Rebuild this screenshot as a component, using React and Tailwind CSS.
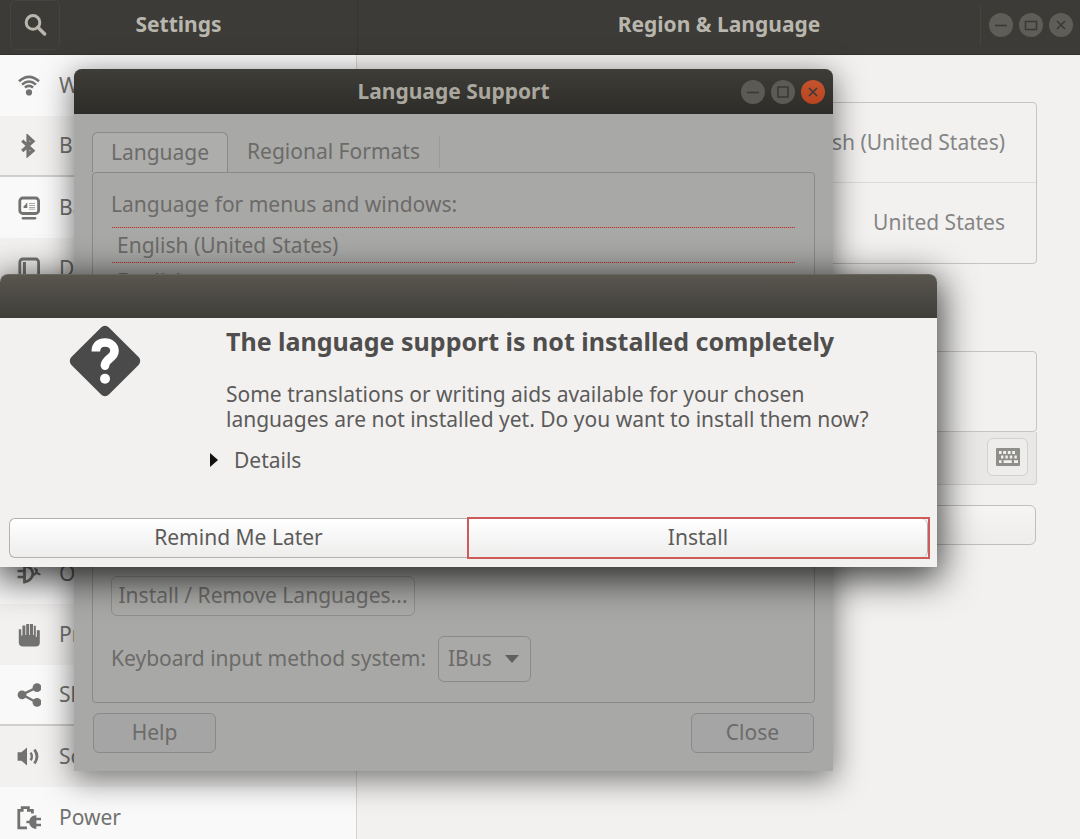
import React, { useState } from 'react';
import clsx from 'clsx';

const WifiIcon = () => (
  <svg viewBox="0 0 24 24" className="w-6 h-6" fill="none" stroke="currentColor" strokeWidth="2.6">
    <path d="M2 7.2Q12 -1.6 22 7.2" />
    <path d="M5 10.6Q12 4.4 19 10.6" />
    <path d="M7.9 13.6Q12 10 16.1 13.6" />
    <circle cx="12" cy="18.4" r="3.1" fill="currentColor" stroke="none" />
  </svg>
);

const BluetoothIcon = () => (
  <svg viewBox="0 0 24 24" className="w-6 h-6" fill="none" stroke="currentColor" strokeWidth="3.2">
    <path d="M5.2 6.6L16 16.6L11 21V2.6L16 7.2L5.2 17" />
  </svg>
);

const BackgroundIcon = () => (
  <svg viewBox="0 0 24 24" className="w-6 h-6" fill="none" stroke="currentColor">
    <rect x="2.8" y="2" width="18.8" height="15.5" rx="3" strokeWidth="2.8" />
    <path d="M6 22.2H18" strokeWidth="2.6" strokeLinecap="round" />
    <path d="M6.6 12V10.5L10.3 6.5V12Z" fill="currentColor" stroke="none" />
    <path d="M12 7.5H18M12 9.5H18M12 11.5H18M12 13.2H18" strokeWidth="1" opacity=".6" />
  </svg>
);

const DockIcon = () => (
  <svg viewBox="0 0 24 24" className="w-6 h-6" fill="none" stroke="currentColor">
    <rect x="2.8" y="2" width="18.8" height="19" rx="3" strokeWidth="2.8" />
    <path d="M7.4 5V18" strokeWidth="3" />
  </svg>
);

const BellIcon = () => (
  <svg viewBox="0 0 24 24" className="w-6 h-6" fill="currentColor">
    <path d="M12 2a6 6 0 0 0-6 6v6l-2 4h16l-2-4V8a6 6 0 0 0-6-6zM10 20h4v2h-4z" />
  </svg>
);

const SearchIcon = () => (
  <svg viewBox="0 0 24 24" className="w-6 h-6" fill="none" stroke="currentColor">
    <circle cx="10" cy="9.4" r="6.8" strokeWidth="3" />
    <path d="M14.8 14.2L21.6 21" strokeWidth="3.4" strokeLinecap="round" />
  </svg>
);

const FlagIcon = () => (
  <svg viewBox="0 0 24 24" className="w-6 h-6" fill="currentColor">
    <path d="M4 2h2v20H4zM8 3h13l-3 5 3 5H8z" />
  </svg>
);

const AccessIcon = () => (
  <svg viewBox="0 0 24 24" className="w-6 h-6" fill="currentColor">
    <circle cx="12" cy="4" r="2.5" />
    <path d="M3 8h18v2.4h-6V22h-2v-6h-2v6H9V10.4H3z" />
  </svg>
);

const PlugIcon = () => (
  <svg viewBox="0 0 24 24" className="w-6 h-6" fill="none" stroke="currentColor">
    <path d="M7.5 4.5C13 4 15.5 8 16 11.8C15.5 15 13 19.4 7.5 20Z" strokeWidth="2.8" />
    <path d="M0.5 9H7M0.5 15H7" strokeWidth="2.6" />
    <path d="M16 13C19 12.4 20 10 20 7M18 6C20 12 22 12.6 23.4 12" strokeWidth="2" />
  </svg>
);

const HandIcon = () => (
  <svg viewBox="0 0 24 24" className="w-6 h-6" fill="currentColor">
    <path d="M1.8 6.2h2.4v6.4h1.2V2.6h3v9.4h.8V1h3v11h.8V1h3v11h.8V2.8h2v11.4l1-.8V7.2h3v12.2a4 4 0 0 1-4 4H6a4.2 4.2 0 0 1-4.2-4z" />
  </svg>
);

const ShareIcon = () => (
  <svg viewBox="0 0 24 24" className="w-6 h-6" fill="currentColor">
    <path d="M19.8 4.5L5 11.6L19.8 19.5" fill="none" stroke="currentColor" strokeWidth="2.4" />
    <circle cx="5" cy="11.8" r="4.4" />
    <circle cx="20" cy="4.6" r="4.4" />
    <circle cx="20" cy="19.4" r="4.4" />
  </svg>
);

const SoundIcon = () => (
  <svg viewBox="0 0 24 24" className="w-6 h-6" fill="currentColor">
    <path d="M0.6 7.2H4.4L10 2.4V20.4L4.4 15.8H0.6Z" />
    <path d="M13.6 7.6Q16.2 11.4 13.6 15.2" fill="none" stroke="currentColor" strokeWidth="2.4" />
    <path d="M17.4 4.6Q22.6 11.4 17.4 18.4" fill="none" stroke="currentColor" strokeWidth="2.8" />
  </svg>
);

const PowerIcon = () => (
  <svg viewBox="0 0 24 24" className="w-6 h-6" fill="none" stroke="currentColor">
    <path d="M10 21.8H1.8V4.4H5.2V1.6H11.4V4.4H15.4V7.4" strokeWidth="2.8" />
    <path d="M9.4 16H13" strokeWidth="2.4" />
    <path d="M19.4 9.2C14.4 9.2 12.2 12.8 12.2 16C12.2 19.2 14.4 22.8 19.4 22.8Z" fill="currentColor" stroke="none" />
    <path d="M18 13H24M18 19H24" strokeWidth="2.4" />
  </svg>
);

const KeyboardIcon = () => (
  <svg viewBox="0 0 24 18" className="w-6 h-[18px]">
    <rect width="24" height="18" rx="1" fill="#8e8e8a" />
    <path
      d="M3 4.5h2.6M7.2 4.5h2.8M11.8 4.5h2.8M16.2 4.5h2.8M5 9h2.4M9.4 9h2.4M13.8 9h2.4M18.4 9h2.4M3 13.6h2.6M7.6 13.6h8.2M18 13.6h4"
      stroke="#f2f1f0"
      strokeWidth="2.8"
    />
  </svg>
);

const QuestionIcon = () => (
  <svg viewBox="0 0 72 72" className="w-[72px] h-[72px] shrink-0">
    <rect x="9.5" y="9.5" width="53" height="53" rx="5.5" fill="#4a4a4a" transform="rotate(45 36 36)" />
    <path
      d="M26.8 26.6C26.8 20 31 17.5 36 17.5C41.5 17.5 45.5 21 45.5 26C45.5 33.5 36 33.5 36 40.6"
      fill="none"
      stroke="#fff"
      strokeWidth="8.6"
    />
    <circle cx="36" cy="40.6" r="4.3" fill="#fff" />
    <circle cx="36" cy="53.7" r="5" fill="#fff" />
  </svg>
);

const items = [
  { label: 'Wi-Fi', Icon: WifiIcon },
  { label: 'Bluetooth', Icon: BluetoothIcon, divider: true },
  { label: 'Background', Icon: BackgroundIcon },
  { label: 'Dock', Icon: DockIcon },
  { label: 'Notifications', Icon: BellIcon },
  { label: 'Search', Icon: SearchIcon },
  { label: 'Region & Language', Icon: FlagIcon },
  { label: 'Universal Access', Icon: AccessIcon },
  { label: 'Online Accounts', Icon: PlugIcon },
  { label: 'Privacy', Icon: HandIcon },
  { label: 'Sharing', Icon: ShareIcon, divider: true },
  { label: 'Sound', Icon: SoundIcon },
  { label: 'Power', Icon: PowerIcon },
];

const glyphs = {
  Minimize: 'M6 12.5H18',
  Maximize: 'M7 7H17V17H7Z',
  Restore: 'M6.5 8.5H17.5V16.5H6.5Z',
  Close: 'M8 8L16 16M16 8L8 16',
};

const WindowButton = ({ name, className }) => (
  <button aria-label={name} className={clsx('w-6 h-6 rounded-full', className)}>
    <svg viewBox="0 0 24 24" className="w-6 h-6" fill="none" stroke="#3a3935" strokeWidth="1.6">
      <path d={glyphs[name]} />
    </svg>
  </button>
);

const SettingsHeader = () => (
  <header className="flex h-[55px] shrink-0 bg-[#3c3b37] border-b border-[#33322e] text-[#b9b6ae]">
    <div className="w-[358px] shrink-0 grid grid-cols-[1fr_auto_1fr] items-center px-[10px] pb-1 border-r border-[#35342f]">
      <button aria-label="Search" className="w-[50px] h-[50px] flex items-center justify-center rounded-md border border-[#45443f]">
        <SearchIcon />
      </button>
      <h1 className="text-[21px] font-bold">Settings</h1>
    </div>
    <div className="flex-1 grid grid-cols-[1fr_auto_1fr] items-center px-[7px] pb-1">
      <h2 className="col-start-2 text-[21px] font-bold">Region &amp; Language</h2>
      <div className="flex justify-end">
        <div className="flex items-center gap-[6px] h-10 pl-2 border-l border-[#45443f]">
          <WindowButton name="Minimize" className="bg-[#5f5d57]" />
          <WindowButton name="Restore" className="bg-[#5f5d57]" />
          <WindowButton name="Close" className="bg-[#5f5d57]" />
        </div>
      </div>
    </div>
  </header>
);

const Sidebar = () => (
  <nav className="w-[357px] shrink-0 border-r border-[#d5d4d2] text-[#727270]">
    {items.map(({ label, Icon, divider }, i) => (
      <a
        key={label}
        href="#"
        className={clsx(
          'flex items-center gap-[18px] h-[61px] pl-[17px] text-[21px]',
          i % 2 ? 'bg-[#f2f1f0]' : 'bg-[#f9f9f9]',
          divider && 'border-b-2 border-[#cfcecc]'
        )}
      >
        <Icon />
        {label}
      </a>
    ))}
  </nav>
);

const RegionPanel = () => (
  <main className="flex-1 px-[43px] pt-[47px] text-[21px] text-[#858585]">
    <div className="rounded-[4px] border border-[#c6c5c3]">
      <div className="flex items-center justify-between h-20 px-[31px] border-b border-[#dcdbd9]">
        <span>Language</span>
        <span>English (United States)</span>
      </div>
      <div className="flex items-center justify-between h-20 px-[31px]">
        <span>Formats</span>
        <span>United States</span>
      </div>
    </div>

    <h3 className="my-5 pt-5 leading-[27px] font-bold">Input Sources</h3>
    <div className="flex items-center h-[81px] px-[31px] rounded-[4px] border border-[#c6c5c3]">English (US)</div>
    <div className="flex items-center justify-end h-[53px] pr-2 pb-[2px] rounded-b-[4px] border border-t-0 border-[#d2d1cf] bg-[#e9e8e7]">
      <button aria-label="Show keyboard layout" className="flex items-center justify-center w-[41px] h-[38px] rounded-md border border-[#d2d1cf] bg-[#eeedec]">
        <KeyboardIcon />
      </button>
    </div>
    <div className="flex pt-5 px-px">
      <button className="flex-1 h-10 rounded-md border border-[#c0bfbd] bg-linear-to-b from-[#f6f5f4] to-[#eeedec]">
        Manage Installed Languages
      </button>
    </div>
  </main>
);

const DottedLine = () => (
  <div className="h-px bg-[repeating-linear-gradient(90deg,#b8382f_0px,#b8382f_1px,#b08a88_1px,#b08a88_2px)]" />
);

const LanguageSupport = () => {
  const [system, setSystem] = useState('IBus');

  return (
    <section className="absolute left-[74px] top-[69px] w-[759px] rounded-t-lg bg-[#a8a8a6] text-[#6c6b69] text-[21px] shadow-[0_7px_30px_2px_rgba(0,0,0,0.5)]">
      <div className="grid grid-cols-[1fr_auto_1fr] items-center h-[45px] px-2 rounded-t-lg bg-linear-to-b from-[#3e3d38] to-[#2d2c28]">
        <h2 className="col-start-2 font-bold text-[#aaa79f]">Language Support</h2>
        <div className="flex justify-end gap-[6px]">
          <WindowButton name="Minimize" className="bg-[#5b5a55]" />
          <WindowButton name="Maximize" className="bg-[#5b5a55]" />
          <WindowButton name="Close" className="bg-linear-to-b from-[#c4532f] to-[#b8451f]" />
        </div>
      </div>

      <div className="px-[18px] pt-[18px] pb-[18px]">
        <div className="flex h-10" role="tablist">
          <button role="tab" aria-selected="true" className="w-[136px] rounded-t-md border border-b-0 border-[#8b8a88] bg-[#adadab]">
            Language
          </button>
          <button role="tab" aria-selected="false" className="w-[212px] my-1 border-r border-[#9b9b99]">
            Regional Formats
          </button>
        </div>

        <div className="px-[18px] pb-5 rounded-[4px] border border-[#8b8a88]">
          <p className="pt-4 leading-[30px]">Language for menus and windows:</p>
          <ul className="h-[340px] mt-2 px-px overflow-hidden">
            <li>
              <DottedLine />
              <div className="pl-[5px] leading-[34px]">English (United States)</div>
              <DottedLine />
            </li>
            <li className="pl-[5px] leading-9">English</li>
          </ul>
          <button className="w-[304px] h-10 mt-[9px] rounded-md border border-[#8f8e8c] bg-[#a9a9a7]">
            Install / Remove Languages...
          </button>
          <div className="flex items-center gap-[10px] mt-5">
            <label htmlFor="input-system" className="w-[317px] whitespace-nowrap">Keyboard input method system:</label>
            <div className="relative">
              <select
                id="input-system"
                value={system}
                onChange={(e) => setSystem(e.target.value)}
                className="appearance-none w-[93px] h-[46px] pl-[9px] rounded-md border border-[#8b8a88] bg-[#a9a9a7]"
              >
                <option>IBus</option>
                <option>none</option>
              </select>
              <svg viewBox="0 0 14 8" className="absolute right-3 top-[19px] w-[14px] h-2 pointer-events-none">
                <path d="M0 0H14L7 8Z" fill="#61605e" />
              </svg>
            </div>
          </div>
        </div>

        <div className="flex justify-between mt-[10px] px-px">
          <button className="w-[123px] h-10 rounded-md border border-[#8b8a88] bg-[#a5a5a5]">Help</button>
          <button className="w-[123px] h-10 rounded-md border border-[#8b8a88] bg-[#a5a5a5]">Close</button>
        </div>
      </div>
    </section>
  );
};

const InstallDialog = () => (
  <section role="dialog" aria-labelledby="install-title" className="absolute left-0 top-[274px] w-[937px] rounded-t-lg bg-[#f2f1f0] text-[#5c5b5a] text-[21px] shadow-[0_8px_36px_4px_rgba(0,0,0,0.75)]">
    <div className="h-11 rounded-t-lg border-t border-[#69665e] bg-linear-to-b from-[#59564f] to-[#3f3e39]" />
    <div className="flex items-start gap-[85px] pl-[69px] pt-[7px]">
      <QuestionIcon />
      <div>
        <h2 id="install-title" className="text-[25px] leading-8 font-bold text-[#4f4e4d]">
          The language support is not installed completely
        </h2>
        <p className="mt-[25px] leading-[25px]">
          Some translations or writing aids available for your chosen
          <br />
          languages are not installed yet. Do you want to install them now?
        </p>
        <button className="flex items-center gap-4 mt-3 -ml-4 leading-8">
          <svg viewBox="0 0 8 14" className="w-2 h-[14px]">
            <path d="M0 0L8 7L0 14Z" fill="#111" />
          </svg>
          Details
        </button>
      </div>
    </div>
    <div className="flex px-[7px] pt-[41px] pb-2 pl-[9px]">
      <button className="flex-1 h-10 my-px rounded-l-md border border-r-0 border-[#b3b2b0] bg-linear-to-b from-white to-[#eeedec]">
        Remind Me Later
      </button>
      <div className="flex w-[463px] border-2 border-[#cf5a5a] bg-[#f2f1f0]">
        <button className="flex-1 rounded-r-md border-r border-[#b3b2b0] bg-linear-to-b from-white to-[#eeedec]">
          Install
        </button>
      </div>
    </div>
  </section>
);

export default function App() {
  return (
    <div className="relative flex flex-col h-screen overflow-hidden bg-[#f2f1f0] font-['Noto_Sans',sans-serif]">
      <SettingsHeader />
      <div className="flex flex-1 min-h-0">
        <Sidebar />
        <RegionPanel />
      </div>
      <LanguageSupport />
      <InstallDialog />
    </div>
  );
}
